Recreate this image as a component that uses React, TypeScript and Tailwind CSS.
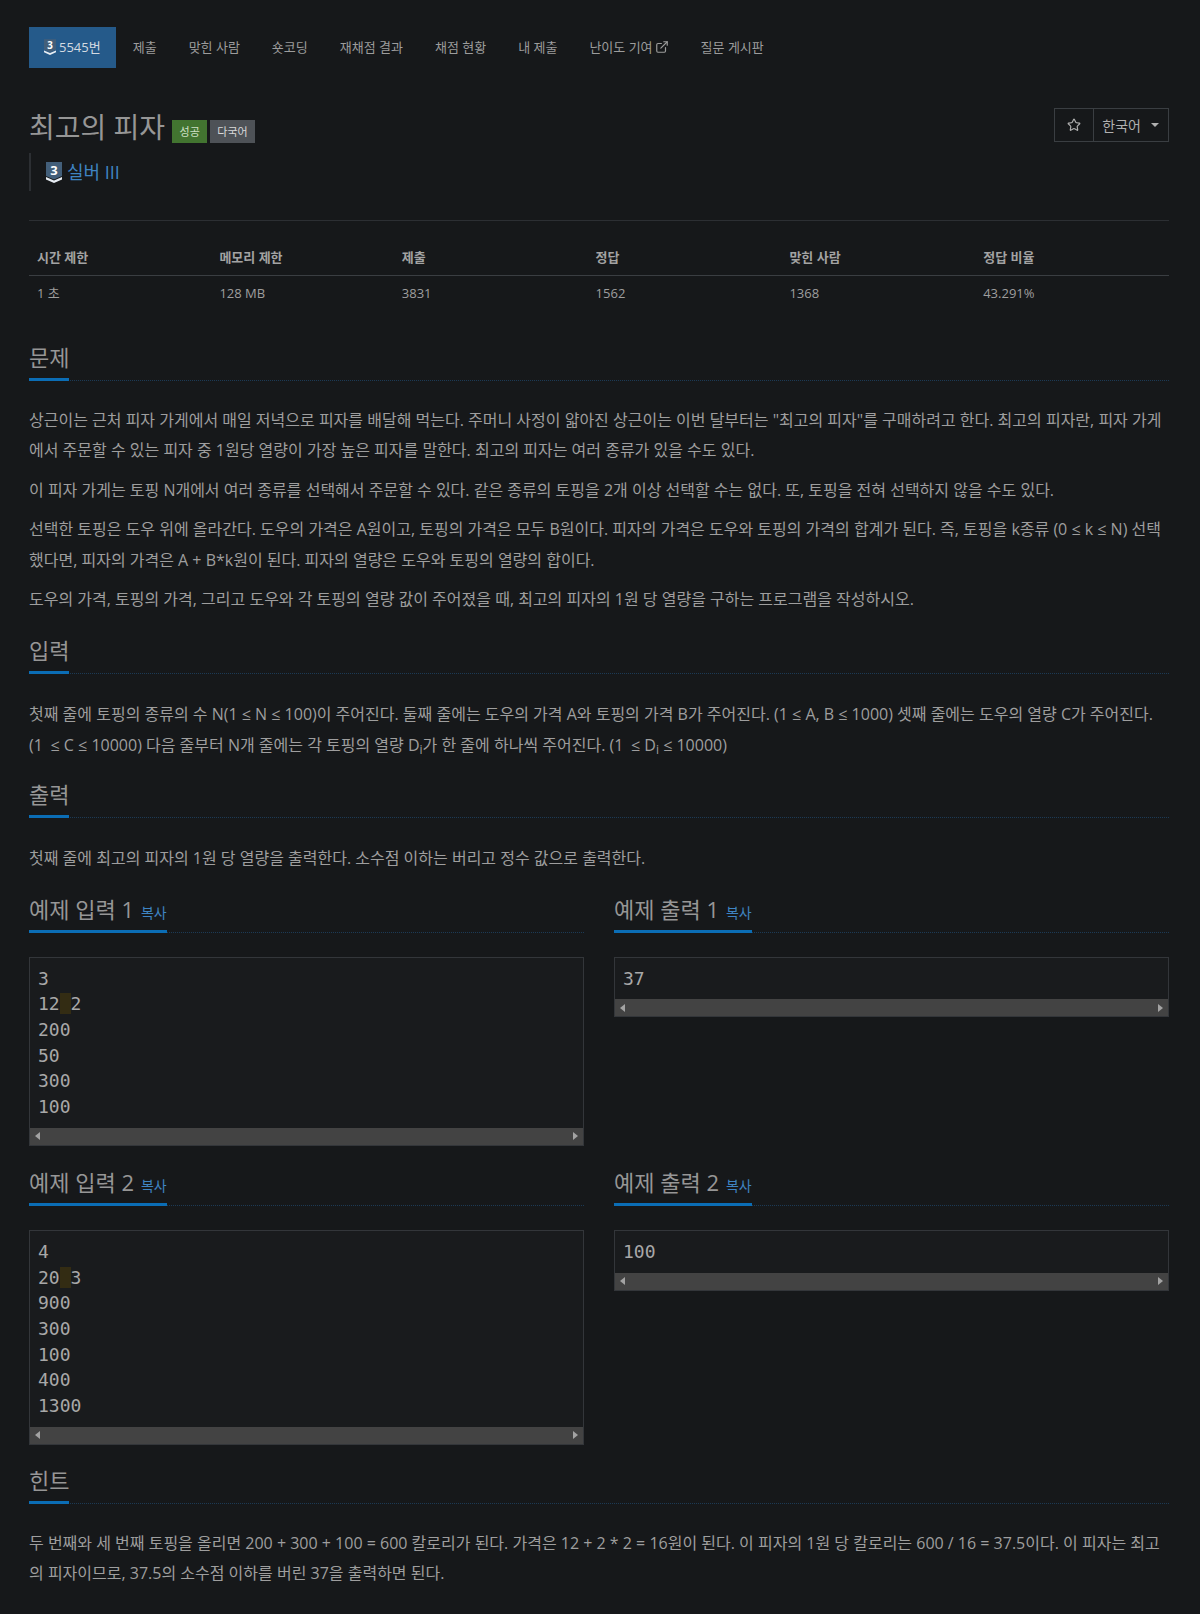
import React from 'react';
import { ExternalLink, Star } from 'lucide-react';

const navItems = ['제출', '맞힌 사람', '숏코딩', '재채점 결과', '채점 현황', '내 제출'];

const TierIcon: React.FC<{ className?: string }> = ({ className }) => (
  <svg viewBox="0 0 16 21" className={className}>
    <path d="M0 0H16V14L8 17.5L0 14Z" fill="#435f7a" />
    <path d="M0 15L8 18.5L16 15V17.5L8 21L0 17.5Z" fill="#e8eef4" />
    <text x="8" y="12.5" textAnchor="middle" fill="#fff" fontSize="13" fontWeight="700" fontFamily="Open Sans, sans-serif">3</text>
  </svg>
);

const Heading: React.FC<{ title: string; copy?: boolean }> = ({ title, copy }) => (
  <div className="border-b border-dotted border-[#1c3a55] h-[39px]">
    <div className="inline-block h-[39px] border-b-[3px] border-[#0b6db5] text-[22px] leading-[30px] text-[#969696] whitespace-nowrap">
      {title}
      {copy && <span className="ml-[7px] text-[14px] text-[#3f84c2]">복사</span>}
    </div>
  </div>
);

const Arrow: React.FC<{ dir: 'left' | 'right' }> = ({ dir }) => (
  <svg viewBox="0 0 6 8" className="w-[6px] h-[8px]">
    <path d={dir === 'left' ? 'M5 0V8L0 4Z' : 'M1 0V8L6 4Z'} fill="#a3a3a3" />
  </svg>
);

const Sample: React.FC<{ lines: string[]; className?: string }> = ({ lines, className }) => (
  <div className={`border border-[#33363a] bg-[#191b1d] ${className ?? ''}`}>
    <pre className="px-[8px] py-[8px] font-['DejaVu_Sans_Mono',monospace] text-[18px] leading-[25.7px] text-[#a8a8a8]">
      {lines.map((line, i) => {
        const parts = line.split(' ');
        return (
          <div key={i}>
            {parts.length > 1 ? (
              <>
                {parts[0]}
                <span className="bg-[#332c13]"> </span>
                {parts[1]}
              </>
            ) : (
              line
            )}
          </div>
        );
      })}
    </pre>
    <div className="flex items-center justify-between h-[17px] bg-[#434343] px-[5px]">
      <Arrow dir="left" />
      <Arrow dir="right" />
    </div>
  </div>
);

const App: React.FC = () => {
  const stats = [
    ['시간 제한', '1 초', 'w-[16%]'],
    ['메모리 제한', '128 MB', 'w-[16%]'],
    ['제출', '3831', 'w-[17%]'],
    ['정답', '1562', 'w-[17%]'],
    ['맞힌 사람', '1368', 'w-[17%]'],
    ['정답 비율', '43.291%', 'w-[17%]'],
  ];

  return (
    <div className="min-h-[1614px] bg-[#16181a] pl-[29px] pr-[31px] pt-[27px] text-[16px] text-[#9e9e9e] font-['Open_Sans','Noto_Sans_CJK_KR',sans-serif]">
      {/* Top nav */}
      <ul className="flex text-[13px] leading-[20px] h-[41px] text-[#9c9c9c]">
        <li className="flex items-center gap-[3px] pb-[1px] px-[15px] bg-[#255a8a] text-[#d4dbe2]">
          <TierIcon className="w-[12px] h-[16px]" />
          5545번
        </li>
        {navItems.map((item) => (
          <li key={item} className="flex items-center pb-[1px] ml-[2px] px-[15px]">{item}</li>
        ))}
        <li className="flex items-center gap-[2px] pb-[1px] ml-[2px] px-[15px]">
          난이도 기여
          <ExternalLink className="w-[14px] h-[14px]" />
        </li>
        <li className="flex items-center pb-[1px] ml-[2px] px-[15px]">질문 게시판</li>
      </ul>

      {/* Title */}
      <div className="mt-[41px] flex items-start justify-between">
        <div>
          <div className="flex items-end gap-[7px] h-[36px]">
            <span className="text-[28px] leading-[36px] text-[#969696]">최고의 피자</span>
            <div className="flex gap-[3px] mb-[2px]">
              <span className="px-[7.5px] h-[23px] leading-[23px] text-[11px] bg-[#427430] text-[#cfe0c6]">성공</span>
              <span className="px-[7px] h-[23px] leading-[23px] text-[11px] bg-[#4e5257] text-[#d8d8d8]">다국어</span>
            </div>
          </div>
          <div className="mt-[8px] flex items-center gap-[5px] h-[38px] border-l-2 border-[#2c2f33] pl-[15px] text-[18px] text-[#3f84c2]">
            <TierIcon className="w-[16px] h-[21px]" />
            실버 III
          </div>
        </div>
        <div className="flex h-[34px] -mt-[1px] border border-[#3a3e42] text-[14px] text-[#b0b0b0]">
          <div className="flex items-center justify-center w-[39px] border-r border-[#3a3e42]">
            <Star className="w-[14px] h-[14px]" />
          </div>
          <div className="flex items-center pl-[8px] pr-[9px] gap-[10px]">
            한국어
            <span className="border-x-[4px] border-t-[4px] border-x-transparent border-t-[#b0b0b0]" />
          </div>
        </div>
      </div>

      <div className="mt-[29px] border-t border-[#2c2f33]" />

      {/* Stats */}
      <table className="mt-[19px] w-full text-[13px] table-fixed">
        <thead>
          <tr className="border-b border-[#3a3e42] h-[35px]">
            {stats.map(([label, , w]) => (
              <th key={label} className={`${w} px-[8px] text-left font-bold text-[#a3a3a3]`}>{label}</th>
            ))}
          </tr>
        </thead>
        <tbody>
          <tr className="h-[37px]">
            {stats.map(([label, value]) => (
              <td key={label} className="px-[8px]">{value}</td>
            ))}
          </tr>
        </tbody>
      </table>

      {/* Problem */}
      <section className="mt-[30px]">
        <Heading title="문제" />
        <div className="mt-[24px] space-y-[9px] leading-[30.4px]">
          <p>상근이는 근처 피자 가게에서 매일 저녁으로 피자를 배달해 먹는다. 주머니 사정이 얇아진 상근이는 이번 달부터는 "최고의 피자"를 구매하려고 한다. 최고의 피자란, 피자 가게에서 주문할 수 있는 피자 중 1원당 열량이 가장 높은 피자를 말한다. 최고의 피자는 여러 종류가 있을 수도 있다.</p>
          <p>이 피자 가게는 토핑 N개에서 여러 종류를 선택해서 주문할 수 있다. 같은 종류의 토핑을 2개 이상 선택할 수는 없다. 또, 토핑을 전혀 선택하지 않을 수도 있다.</p>
          <p>선택한 토핑은 도우 위에 올라간다. 도우의 가격은 A원이고, 토핑의 가격은 모두 B원이다. 피자의 가격은 도우와 토핑의 가격의 합계가 된다. 즉, 토핑을 k종류 (0 ≤ k ≤ N) 선택했다면, 피자의 가격은 A + B*k원이 된다. 피자의 열량은 도우와 토핑의 열량의 합이다.</p>
          <p>도우의 가격, 토핑의 가격, 그리고 도우와 각 토핑의 열량 값이 주어졌을 때, 최고의 피자의 1원 당 열량을 구하는 프로그램을 작성하시오.</p>
        </div>
      </section>

      <section className="mt-[21px]">
        <Heading title="입력" />
        <p className="mt-[25px] leading-[30.4px]">
          첫째 줄에 토핑의 종류의 수 N(1 ≤ N ≤ 100)이 주어진다. 둘째 줄에는 도우의 가격 A와 토핑의 가격 B가 주어진다. (1 ≤ A, B ≤ 1000) 셋째 줄에는 도우의 열량 C가 주어진다. (1 <span className="ml-[3.5px]">≤</span> C ≤ 10000) 다음 줄부터 N개 줄에는 각 토핑의 열량 D<sub>i</sub>가 한 줄에 하나씩 주어진다. (1 <span className="ml-[3.5px]">≤</span> D<sub>i</sub> ≤ 10000)
        </p>
      </section>

      <section className="mt-[19px]">
        <Heading title="출력" />
        <p className="mt-[25px] leading-[30.4px]">첫째 줄에 최고의 피자의 1원 당 열량을 출력한다. 소수점 이하는 버리고 정수 값으로 출력한다.</p>
      </section>

      {/* Samples */}
      <div className="mt-[20px] grid grid-cols-2 gap-x-[30px] gap-y-[21px]">
        <section>
          <Heading title="예제 입력 1" copy />
          <Sample className="mt-[24px]" lines={['3', '12 2', '200', '50', '300', '100']} />
        </section>
        <section>
          <Heading title="예제 출력 1" copy />
          <Sample className="mt-[24px]" lines={['37']} />
        </section>
        <section>
          <Heading title="예제 입력 2" copy />
          <Sample className="mt-[24px]" lines={['4', '20 3', '900', '300', '100', '400', '1300']} />
        </section>
        <section>
          <Heading title="예제 출력 2" copy />
          <Sample className="mt-[24px]" lines={['100']} />
        </section>
      </div>

      <section className="mt-[20px]">
        <Heading title="힌트" />
        <p className="mt-[24px] leading-[30.4px]">두 번째와 세 번째 토핑을 올리면 200 + 300 + 100 = 600 칼로리가 된다. 가격은 12 + 2 * 2 = 16원이 된다. 이 피자의 1원 당 칼로리는 600 / 16 = 37.5이다. 이 피자는 최고의 피자이므로, 37.5의 소수점 이하를 버린 37을 출력하면 된다.</p>
      </section>
    </div>
  );
};

export default App;
